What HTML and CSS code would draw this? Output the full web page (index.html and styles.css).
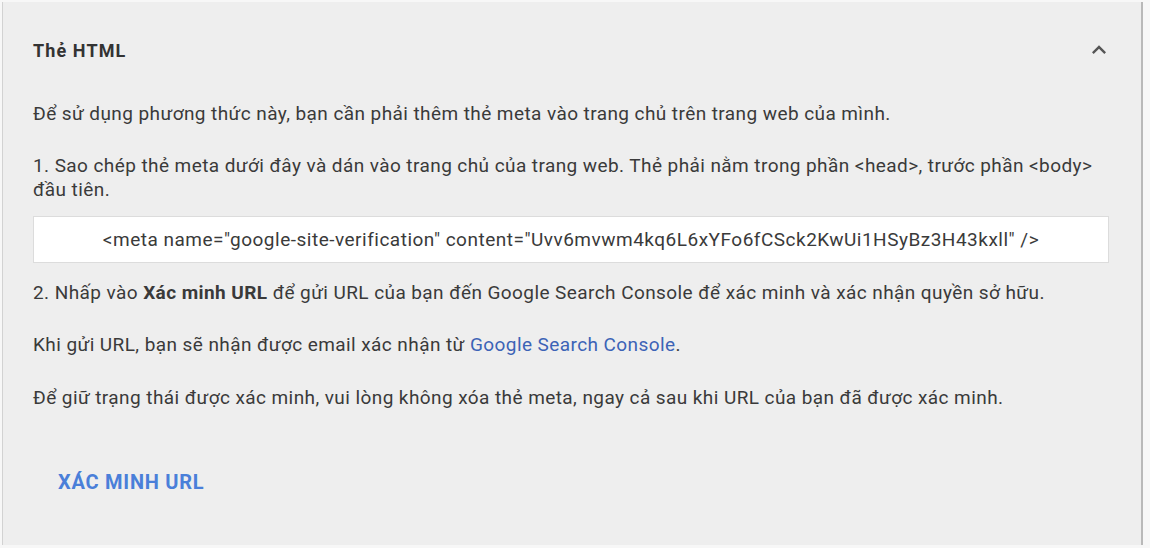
FILE: index.html
```html
<!DOCTYPE html>
<html lang="vi">
<head>
<meta charset="utf-8">
<link rel="stylesheet" href="styles.css">
</head>
<body>
<div class="panel">
  <div class="header">
    <h2 class="title">Thẻ HTML</h2>
    <svg class="chev" width="28" height="28" viewBox="0 0 24 24"><path d="M7.41 15.41L12 10.83l4.59 4.58L18 14l-6-6-6 6z" fill="#555"/></svg>
  </div>
  <p class="p intro">Để sử dụng phương thức này, bạn cần phải thêm thẻ meta vào trang chủ trên trang web của mình.</p>
  <p class="p step1">1. Sao chép thẻ meta dưới đây và dán vào trang chủ của trang web. Thẻ phải nằm trong phần &lt;head&gt;, trước phần &lt;body&gt; đầu tiên.</p>
  <div class="code">&lt;meta name="google-site-verification" content="Uvv6mvwm4kq6L6xYFo6fCSck2KwUi1HSyBz3H43kxll" /&gt;</div>
  <p class="p step2">2. Nhấp vào <b>Xác minh URL</b> để gửi URL của bạn đến Google Search Console để xác minh và xác nhận quyền sở hữu.</p>
  <p class="p">Khi gửi URL, bạn sẽ nhận được email xác nhận từ <a class="link" href="#">Google Search Console</a>.</p>
  <p class="p last">Để giữ trạng thái được xác minh, vui lòng không xóa thẻ meta, ngay cả sau khi URL của bạn đã được xác minh.</p>
  <div class="actions"><button class="btn">XÁC MINH URL</button></div>
</div>
</body>
</html>
```
FILE: styles.css
```css
html, body { margin: 0; padding: 0; }
body {
  background: #f7f7f7;
  font-family: Roboto, "Liberation Sans", Arial, sans-serif;
  color: #3a3a3a;
  width: 1150px;
  height: 548px;
  overflow: hidden;
}
.panel {
  box-sizing: border-box;
  margin: 2px 0 0 2px;
  width: 1141px;
  height: 543px;
  background: #eeeeee;
  border-left: 1px solid #d2d2d2;
  border-right: 2px solid #b9b9b9;
  padding: 0 32px 0 30px;
}
.header {
  display: flex;
  align-items: center;
  justify-content: space-between;
  height: 96px;
}
.title {
  margin: 0;
  font-size: 18px;
  letter-spacing: 1.1px;
  font-weight: 700;
  color: #333;
}
.chev { margin-right: -4px; }
.p {
  margin: 0;
  font-size: 19px;
  letter-spacing: 0.42px;
  line-height: 24px;
}
.intro { margin-top: 4px; }
.step1 { margin-top: 22px; }
.code {
  margin-top: 14px;
  background: #fff;
  border: 1px solid #dcdcdc;
  height: 45px;
  display: flex;
  align-items: center;
  justify-content: center;
  font-size: 19px;
  letter-spacing: 0.5px;
}
.step2 { margin-top: 18px; }
.p + .p { margin-top: 28px; }
.p + .p.last { margin-top: 29px; }
.link { color: #3c63b6; text-decoration: none; }
.actions { margin-top: 60px; }
.btn {
  border: 0;
  background: none;
  padding: 0;
  margin-left: 25px;
  font-family: inherit;
  font-weight: 700;
  font-size: 20px;
  letter-spacing: 0.75px;
  color: #4a7fd9;
}
```
